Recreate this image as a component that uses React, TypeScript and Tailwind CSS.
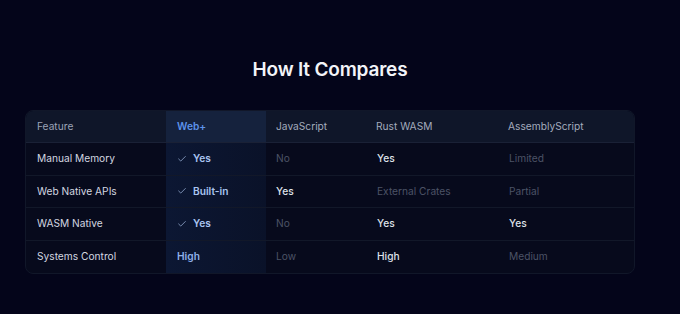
import { Check } from 'lucide-react'

type Cell = { text: string; tone: 'strong' | 'dim' }

const competitors = ['JavaScript', 'Rust WASM', 'AssemblyScript']

const rows: { feature: string; web: string; check: boolean; others: Cell[] }[] = [
  {
    feature: 'Manual Memory',
    web: 'Yes',
    check: true,
    others: [
      { text: 'No', tone: 'dim' },
      { text: 'Yes', tone: 'strong' },
      { text: 'Limited', tone: 'dim' },
    ],
  },
  {
    feature: 'Web Native APIs',
    web: 'Built-in',
    check: true,
    others: [
      { text: 'Yes', tone: 'strong' },
      { text: 'External Crates', tone: 'dim' },
      { text: 'Partial', tone: 'dim' },
    ],
  },
  {
    feature: 'WASM Native',
    web: 'Yes',
    check: true,
    others: [
      { text: 'No', tone: 'dim' },
      { text: 'Yes', tone: 'strong' },
      { text: 'Yes', tone: 'strong' },
    ],
  },
  {
    feature: 'Systems Control',
    web: 'High',
    check: false,
    others: [
      { text: 'Low', tone: 'dim' },
      { text: 'High', tone: 'strong' },
      { text: 'Medium', tone: 'dim' },
    ],
  },
]

const cols = 'grid grid-cols-[140px_100px_100px_132px_138px]'

export default function App() {
  return (
    <div
      className="min-h-[314px] w-[680px] bg-[#04051a] pt-[57px]"
      style={{ fontFamily: 'Inter, "Noto Sans", sans-serif' }}
    >
      <div className="w-[660px]">
        <h2 className="text-center text-[19px] font-semibold leading-[25px] tracking-[-0.01em] text-[#f3f4f8]">
          How It Compares
        </h2>

        <div className="mx-auto mt-[28px] w-[610px] overflow-hidden rounded-lg border border-[#111729] bg-[#070a1c]">
          <div className={`${cols} h-[32px] border-b border-[#1a2136] bg-[#0f1629] text-[10.2px]`}>
            <div className="flex items-center pl-[11px] text-[#9ba3b7]">Feature</div>
            <div className="flex items-center bg-[#15223d] pl-[11px] font-semibold text-[#5d93ea]">Web+</div>
            {competitors.map((c) => (
              <div key={c} className="flex items-center pl-[10px] text-[#a3abbd]">
                {c}
              </div>
            ))}
          </div>

          {rows.map((r, i) => (
            <div
              key={r.feature}
              className={`${cols} h-[32.5px] text-[10.2px] ${i < rows.length - 1 ? 'border-b border-[#121829]' : ''}`}
            >
              <div className="flex items-center pl-[11px] text-[#d3d7e0]">{r.feature}</div>
              <div className="flex items-center gap-[6px] bg-gradient-to-r from-[#0c1733] to-[#0a1229] pl-[11px]">
                {r.check && <Check className="h-[10px] w-[10px] text-[#8ea4c9]" strokeWidth={2} />}
                <span className={`font-semibold ${r.check ? 'text-[#a9c4f0]' : 'text-[#8fb1ea]'}`}>{r.web}</span>
              </div>
              {r.others.map((o, j) => (
                <div
                  key={j}
                  className={`flex items-center ${j === 0 ? 'pl-[10px]' : 'pl-[11px]'} ${
                    o.tone === 'strong' ? 'font-medium text-[#dfe2ea]' : 'text-[#4c5366]'
                  }`}
                >
                  {o.text}
                </div>
              ))}
            </div>
          ))}
        </div>
      </div>
    </div>
  )
}
